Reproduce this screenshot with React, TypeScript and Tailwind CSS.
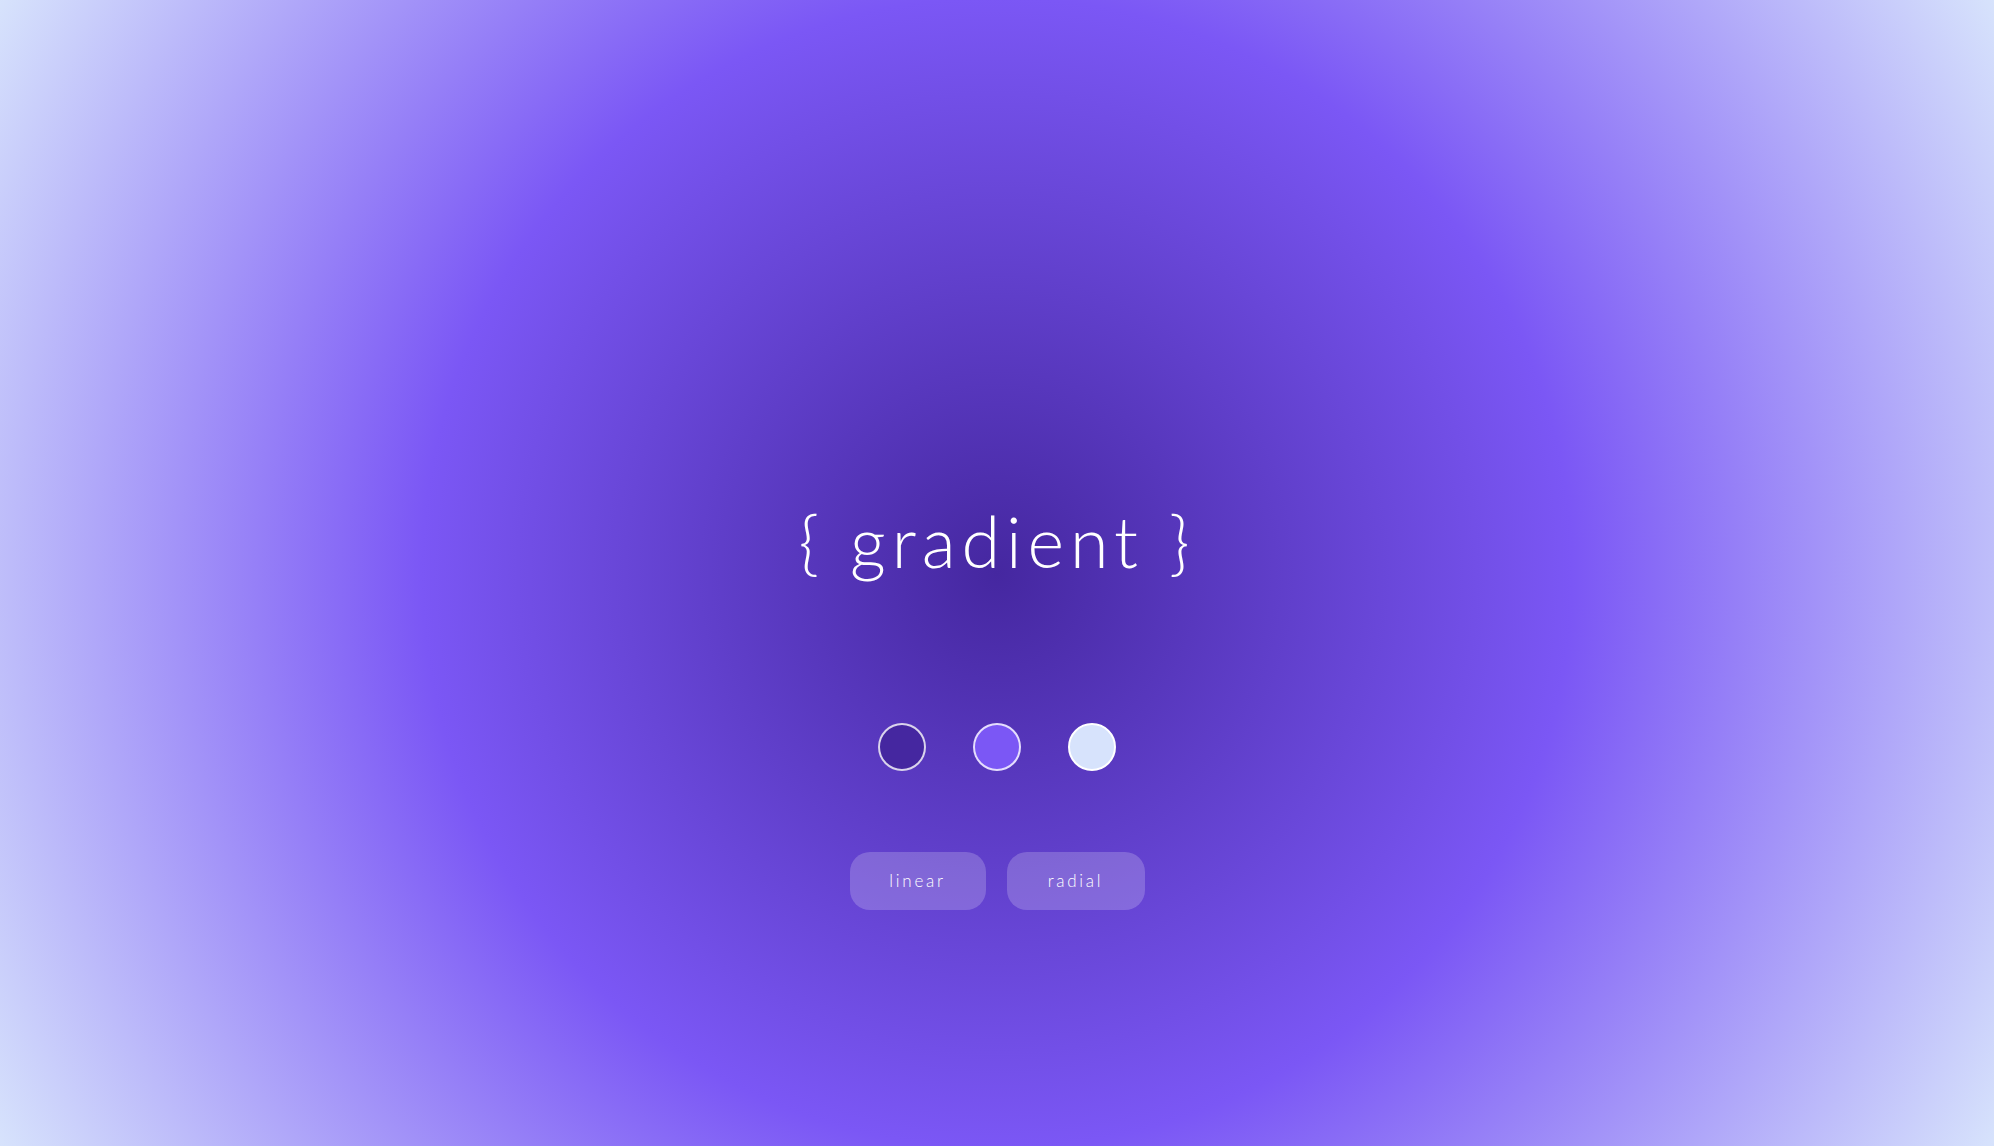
import React from 'react';

const swatches = [
  { color: 'bg-[#4527a0]', ring: 'border-white/80' },
  { color: 'bg-[#7b57f5]', ring: 'border-white/80' },
  { color: 'bg-[#d7e3fc]', ring: 'border-white' },
];

export default function App() {
  return (
    <div
      className="w-full h-screen overflow-hidden flex flex-col items-center bg-[radial-gradient(circle_at_center,#4527a0_0%,#7b57f5_50%,#d7e3fc_100%)]"
      style={{ fontFamily: 'Lato, "Open Sans", sans-serif' }}
    >
      {/* Title */}
      <h1 className="mt-[506px] text-white text-[70px] font-light leading-none tracking-[0.085em]">
        {'{ gradient }'}
      </h1>

      {/* Colour stops */}
      <div className="mt-[147px] flex items-center gap-[47px]">
        {swatches.map((s, i) => (
          <div key={i} className={`w-12 h-12 rounded-full border-2 ${s.ring} ${s.color}`}></div>
        ))}
      </div>

      {/* Mode toggles */}
      <div className="mt-[81px] flex items-center gap-[21px]">
        <button className="w-[136px] h-[58px] rounded-[20px] bg-white/20 text-white text-[17px] font-light tracking-[0.16em]">
          linear
        </button>
        <button className="w-[138px] h-[58px] rounded-[20px] bg-white/20 text-white text-[17px] font-light tracking-[0.16em]">
          radial
        </button>
      </div>
    </div>
  );
}
